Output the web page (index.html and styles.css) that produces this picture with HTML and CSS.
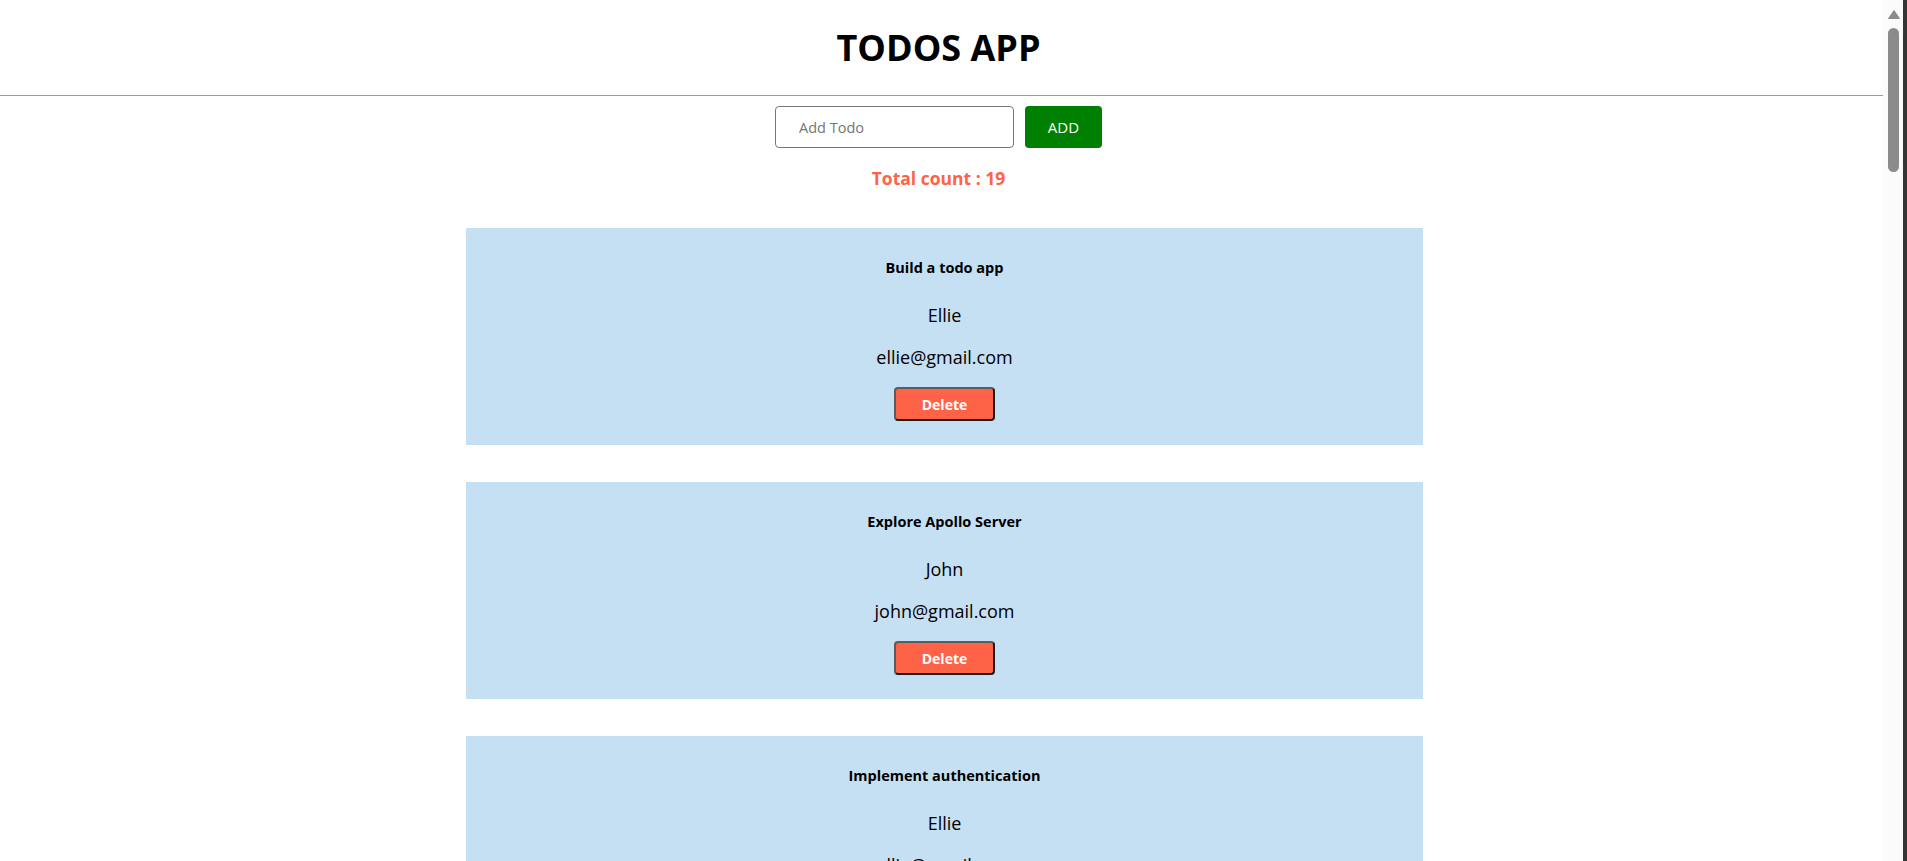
FILE: index.html
```html
<!DOCTYPE html>
<html lang="en">
<head>
<meta charset="utf-8">
<title>Todos App</title>
<link rel="stylesheet" href="styles.css">
</head>
<body>
<div class="page">
  <header class="app-header">
    <h1 class="app-title">TODOS APP</h1>
  </header>
  <main class="app-main">
    <form class="add-bar" onsubmit="return false">
      <input class="add-input" type="text" placeholder="Add Todo">
      <button class="add-btn" type="submit">ADD</button>
    </form>
    <p class="total">Total count : 19</p>
    <ul class="todo-list">
      <li class="todo-card"><h4 class="todo-title">Build a todo app</h4><p class="todo-text">Ellie</p><p class="todo-text">ellie@gmail.com</p><button class="delete-btn">Delete</button></li>
      <li class="todo-card"><h4 class="todo-title">Explore Apollo Server</h4><p class="todo-text">John</p><p class="todo-text">john@gmail.com</p><button class="delete-btn">Delete</button></li>
      <li class="todo-card"><h4 class="todo-title">Implement authentication</h4><p class="todo-text">Ellie</p><p class="todo-text">ellie@gmail.com</p><button class="delete-btn">Delete</button></li>
      <li class="todo-card"><h4 class="todo-title">Learn GraphQL basics</h4><p class="todo-text">John</p><p class="todo-text">john@gmail.com</p><button class="delete-btn">Delete</button></li>
      <li class="todo-card"><h4 class="todo-title">Write resolvers</h4><p class="todo-text">Ellie</p><p class="todo-text">ellie@gmail.com</p><button class="delete-btn">Delete</button></li>
      <li class="todo-card"><h4 class="todo-title">Set up database</h4><p class="todo-text">John</p><p class="todo-text">john@gmail.com</p><button class="delete-btn">Delete</button></li>
      <li class="todo-card"><h4 class="todo-title">Add mutations</h4><p class="todo-text">Ellie</p><p class="todo-text">ellie@gmail.com</p><button class="delete-btn">Delete</button></li>
      <li class="todo-card"><h4 class="todo-title">Connect Apollo Client</h4><p class="todo-text">John</p><p class="todo-text">john@gmail.com</p><button class="delete-btn">Delete</button></li>
      <li class="todo-card"><h4 class="todo-title">Style the UI</h4><p class="todo-text">Ellie</p><p class="todo-text">ellie@gmail.com</p><button class="delete-btn">Delete</button></li>
      <li class="todo-card"><h4 class="todo-title">Write unit tests</h4><p class="todo-text">John</p><p class="todo-text">john@gmail.com</p><button class="delete-btn">Delete</button></li>
      <li class="todo-card"><h4 class="todo-title">Add pagination</h4><p class="todo-text">Ellie</p><p class="todo-text">ellie@gmail.com</p><button class="delete-btn">Delete</button></li>
      <li class="todo-card"><h4 class="todo-title">Handle errors</h4><p class="todo-text">John</p><p class="todo-text">john@gmail.com</p><button class="delete-btn">Delete</button></li>
      <li class="todo-card"><h4 class="todo-title">Add subscriptions</h4><p class="todo-text">Ellie</p><p class="todo-text">ellie@gmail.com</p><button class="delete-btn">Delete</button></li>
      <li class="todo-card"><h4 class="todo-title">Cache queries</h4><p class="todo-text">John</p><p class="todo-text">john@gmail.com</p><button class="delete-btn">Delete</button></li>
      <li class="todo-card"><h4 class="todo-title">Deploy the server</h4><p class="todo-text">Ellie</p><p class="todo-text">ellie@gmail.com</p><button class="delete-btn">Delete</button></li>
      <li class="todo-card"><h4 class="todo-title">Write documentation</h4><p class="todo-text">John</p><p class="todo-text">john@gmail.com</p><button class="delete-btn">Delete</button></li>
      <li class="todo-card"><h4 class="todo-title">Review pull requests</h4><p class="todo-text">Ellie</p><p class="todo-text">ellie@gmail.com</p><button class="delete-btn">Delete</button></li>
      <li class="todo-card"><h4 class="todo-title">Optimize performance</h4><p class="todo-text">John</p><p class="todo-text">john@gmail.com</p><button class="delete-btn">Delete</button></li>
      <li class="todo-card"><h4 class="todo-title">Release version 1.0</h4><p class="todo-text">Ellie</p><p class="todo-text">ellie@gmail.com</p><button class="delete-btn">Delete</button></li>
    </ul>
  </main>
</div>
<div class="scrollbar" aria-hidden="true">
  <div class="scroll-track">
    <svg class="scroll-arrow" width="12" height="9" viewBox="0 0 12 9"><path d="M6 0.5 L11.5 8.5 L0.5 8.5 Z" fill="#8b8b8b" stroke="#8b8b8b" stroke-linejoin="round"/></svg>
    <div class="scroll-thumb"></div>
  </div>
  <div class="scroll-edge"></div>
</div>
</body>
</html>
```
FILE: styles.css
```css
html,
body {
  margin: 0;
  height: 100%;
  overflow: hidden;
  background: #ffffff;
}

body {
  font-family: "Open Sans", "Noto Sans", sans-serif;
  color: #000000;
}

.page {
  margin-right: 24px;
}

/* fake window scrollbar (overlay at the right edge) */
.scrollbar {
  position: fixed;
  top: 0;
  right: 0;
  width: 24px;
  height: 100vh;
  display: flex;
}

.scroll-track {
  width: 20px;
  background: #fbfbfb;
  display: flex;
  flex-direction: column;
  align-items: center;
  padding-top: 10px;
  box-sizing: border-box;
}

.scroll-arrow {
  display: block;
  margin-left: 1px;
}

.scroll-thumb {
  width: 11px;
  height: 144px;
  margin-top: 9px;
  margin-left: 1px;
  border-radius: 6px;
  background: #8b8b8b;
}

.scroll-edge {
  width: 4px;
  background: #353535;
}

.app-header {
  padding: 24px 6px 23px 0;
  border-bottom: 1px solid #9c9c9c;
  text-align: center;
}

.app-title {
  margin: 0;
  font-size: 36px;
  line-height: 48px;
  font-weight: 700;
}

.app-main {
  display: flex;
  flex-direction: column;
  align-items: center;
}

.add-bar {
  display: flex;
  gap: 11px;
  margin: 10px 6px 0 0;
}

.add-input {
  box-sizing: border-box;
  width: 239px;
  height: 42px;
  padding: 0 10px 0 23px;
  border: 1px solid #767676;
  border-radius: 4px;
  font-family: "Open Sans", "Noto Sans", sans-serif;
  font-size: 14.5px;
  color: #000;
  background: #fff;
  outline: none;
}

.add-input::placeholder {
  color: #757575;
}

.add-btn {
  box-sizing: border-box;
  width: 77px;
  height: 42px;
  border: none;
  border-radius: 4px;
  background: #008000;
  color: #ffffff;
  font-family: "Open Sans", "Noto Sans", sans-serif;
  font-size: 15px;
  padding: 0;
}

.total {
  margin: 18px 6px 0 0;
  font-size: 17.5px;
  line-height: 24px;
  font-weight: 700;
  color: #ff6347;
}

.todo-list {
  list-style: none;
  margin: 38px 0 0 6px;
  padding: 0;
  display: flex;
  flex-direction: column;
  gap: 37px;
}

.todo-card {
  box-sizing: border-box;
  width: 957px;
  padding: 30px 20px 24px;
  background: #c5dff3;
  display: flex;
  flex-direction: column;
  align-items: center;
  text-align: center;
}

.todo-title {
  margin: 0 0 25px;
  font-size: 14.5px;
  line-height: 20px;
  font-weight: 700;
}

.todo-text {
  margin: 0 0 18px;
  font-size: 18px;
  line-height: 24px;
}

.delete-btn {
  box-sizing: border-box;
  width: 101px;
  height: 34px;
  padding: 0;
  border: 2px solid;
  border-color: #5c5c5c #1c1c1c #1c1c1c #5c5c5c;
  border-radius: 4px;
  background: #ff6347;
  color: #ffffff;
  font-family: "Open Sans", "Noto Sans", sans-serif;
  font-size: 14px;
  font-weight: 700;
}
```
